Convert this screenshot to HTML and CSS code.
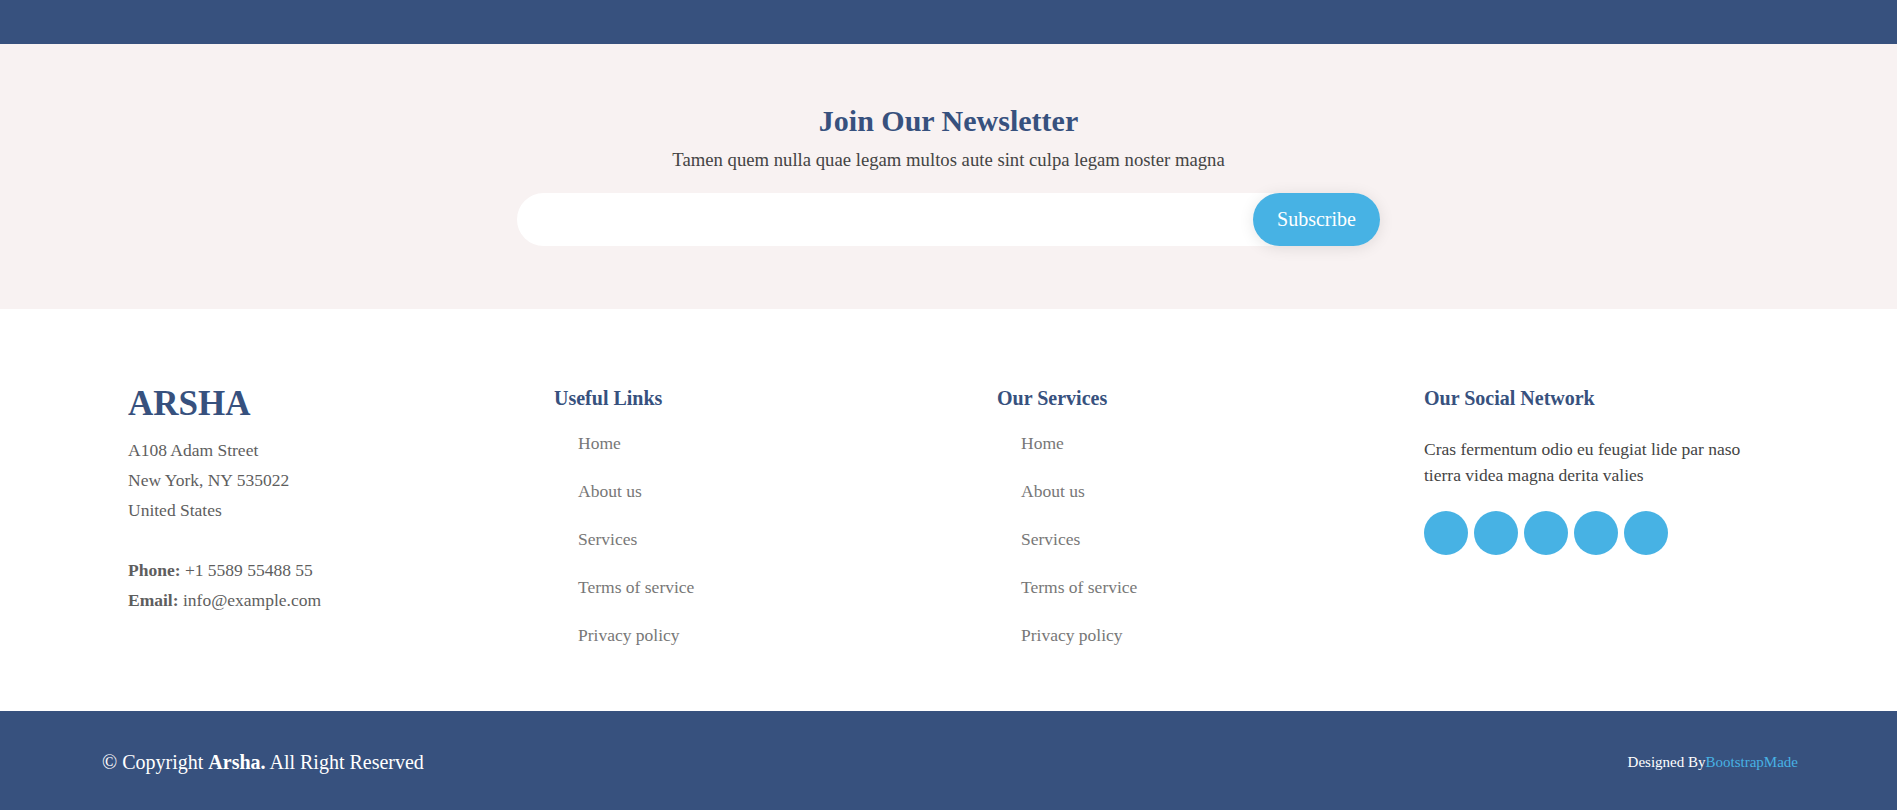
FILE: index.html
```html
<!DOCTYPE html>
<html lang="en">
<head>
<meta charset="utf-8">
<title>Arsha Footer</title>
<link rel="stylesheet" href="styles.css">
</head>
<body>
  <div class="topbar"></div>
  <section class="newsletter">
    <h4 class="newsletter-title">Join Our Newsletter</h4>
    <p class="newsletter-text">Tamen quem nulla quae legam multos aute sint culpa legam noster magna</p>
    <form class="newsletter-form">
      <input class="newsletter-input" type="email" name="email">
      <button class="newsletter-btn" type="button">Subscribe</button>
    </form>
  </section>
  <section class="footer-top">
    <div class="footer-grid">
      <div class="footer-contact">
        <h3 class="brand">ARSHA</h3>
        <p class="address">A108 Adam Street<br>New York, NY 535022<br>United States</p>
        <p class="address contact-lines"><strong>Phone:</strong> +1 5589 55488 55<br><strong>Email:</strong> info@example.com</p>
      </div>
      <div class="footer-links">
        <h4 class="col-title">Useful Links</h4>
        <ul class="link-list">
          <li><a href="#">Home</a></li>
          <li><a href="#">About us</a></li>
          <li><a href="#">Services</a></li>
          <li><a href="#">Terms of service</a></li>
          <li><a href="#">Privacy policy</a></li>
        </ul>
      </div>
      <div class="footer-links">
        <h4 class="col-title">Our Services</h4>
        <ul class="link-list">
          <li><a href="#">Home</a></li>
          <li><a href="#">About us</a></li>
          <li><a href="#">Services</a></li>
          <li><a href="#">Terms of service</a></li>
          <li><a href="#">Privacy policy</a></li>
        </ul>
      </div>
      <div class="footer-social">
        <h4 class="col-title">Our Social Network</h4>
        <p class="social-text">Cras fermentum odio eu feugiat lide par naso tierra videa magna derita valies</p>
        <div class="social-links">
          <a href="#" class="social-dot"></a>
          <a href="#" class="social-dot"></a>
          <a href="#" class="social-dot"></a>
          <a href="#" class="social-dot"></a>
          <a href="#" class="social-dot"></a>
        </div>
      </div>
    </div>
  </section>
  <footer class="footer-bottom">
    <div class="copyright">© Copyright <strong>Arsha.</strong> All Right Reserved</div>
    <div class="credits">Designed By<a href="#">BootstrapMade</a></div>
  </footer>
</body>
</html>
```
FILE: styles.css
```css
* { box-sizing: border-box; }

body {
  margin: 0;
  font-family: "Liberation Serif", "Times New Roman", serif;
  color: #444444;
  background: #ffffff;
}

.topbar {
  height: 44px;
  background: #37517e;
}

.newsletter {
  background: #f8f2f2;
  padding: 59px 0 63px;
  text-align: center;
}

.newsletter-title {
  margin: 0;
  font-size: 30px;
  line-height: 35px;
  font-weight: 700;
  color: #37517e;
}

.newsletter-text {
  margin: 8px 0 0;
  font-size: 18.7px;
  line-height: 28.5px;
  color: #444444;
}

.newsletter-form {
  display: flex;
  width: 863px;
  height: 53px;
  margin: 18px auto 0;
  background: #ffffff;
  border-radius: 50px;
}

.newsletter-input {
  flex: 1;
  min-width: 0;
  border: 0;
  outline: none;
  background: transparent;
  padding: 0 20px;
  font-family: inherit;
  font-size: 17px;
}

.newsletter-btn {
  width: 127px;
  border: 0;
  border-radius: 50px;
  background: #47b2e4;
  color: #ffffff;
  font-family: inherit;
  font-size: 20px;
  padding: 0;
  box-shadow: 0 2px 15px rgba(0, 0, 0, 0.1);
  cursor: pointer;
}

.footer-top {
  padding: 75px 0 52px 128px;
}

.footer-grid {
  display: grid;
  grid-template-columns: 426px 443px 427px 345px;
  align-items: start;
}

.brand {
  margin: 0;
  font-size: 35px;
  line-height: 40px;
  font-weight: 700;
  color: #37517e;
}

.address {
  margin: 11px 0 0;
  font-size: 17.5px;
  line-height: 30px;
  color: #5e5e5e;
}

.contact-lines {
  margin-top: 30px;
}

.address strong {
  font-weight: 700;
}

.col-title {
  margin: 2px 0 0;
  font-size: 20px;
  line-height: 24px;
  font-weight: 700;
  color: #37517e;
}

.link-list {
  list-style: none;
  margin: 9px 0 0;
  padding: 0 0 0 24px;
}

.link-list li {
  padding: 11px 0;
  font-size: 17.5px;
  line-height: 26px;
}

.link-list a {
  color: #777777;
  text-decoration: none;
}

.social-text {
  margin: 26px 0 0;
  font-size: 17.5px;
  line-height: 26.5px;
  color: #444444;
}

.social-links {
  display: flex;
  gap: 6px;
  margin-top: 22px;
}

.social-dot {
  width: 44px;
  height: 44px;
  border-radius: 50%;
  background: #47b2e4;
}

.footer-bottom {
  height: 100px;
  background: #37517e;
  color: #ffffff;
  display: flex;
  align-items: center;
  justify-content: space-between;
  padding: 3px 99px 0 102px;
}

.copyright {
  font-size: 20px;
}

.credits {
  font-size: 15px;
}

.credits a {
  color: #47b2e4;
  text-decoration: none;
}
```
